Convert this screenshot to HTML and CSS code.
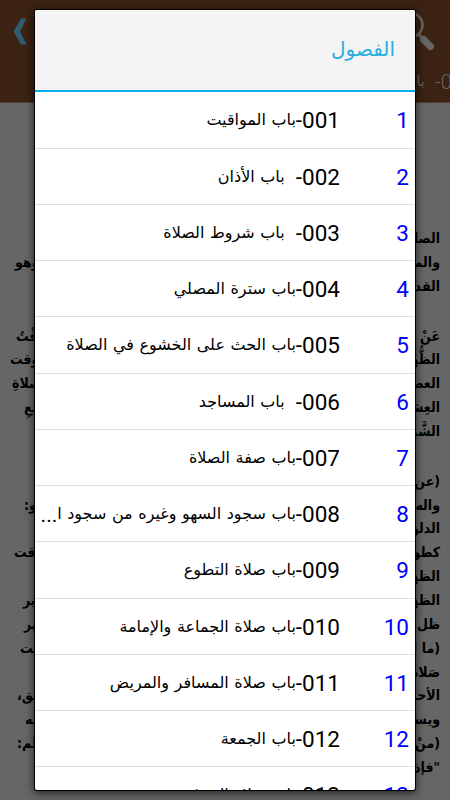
FILE: index.html
```html
<!DOCTYPE html>
<html lang="ar" dir="rtl">
<head>
    <meta charset="UTF-8">
    <meta name="viewport" content="width=device-width, initial-scale=1.0">
    <title>الفصول</title>
    <link rel="stylesheet" href="styles.css">
</head>
<body>
    <div class="page">
        <div class="toolbar">
            <div class="toolbar-icons">
                <svg class="search-icon" width="44" height="44" viewBox="0 0 44 44">
                    <circle cx="17.5" cy="14" r="12" fill="none" stroke="#666" stroke-width="2.6"/>
                    <path d="M25.5 23l4 4.5" stroke="#666" stroke-width="3"/>
                    <path d="M30.5 28.5L37.5 35.5" stroke="#666" stroke-width="7" stroke-linecap="round"/>
                </svg>
                <svg class="back-icon" width="14" height="27" viewBox="0 0 14 27">
                    <path d="M8 0.5H13.5L7 13.5L13.5 26.5H8L0.5 13.5Z" fill="#2f5e70"/>
                </svg>
            </div>
            <div class="toolbar-title"><span class="num">001-</span>&nbsp; &nbsp;<span class="text">باب المواقيت</span></div>
        </div>

        <div class="content">
            <div class="line"><span>الصلاة</span></div>
            <div class="line"><span>والمو</span><span class="l15">وهو</span></div>
            <div class="line"><span>القدر</span></div>
            <div class="line gap"></div>
            <div class="line"><span>عَنْ عـ</span><span class="l16">وقْتُ</span></div>
            <div class="line"><span>الظُّهْر</span><span class="l10">وقت</span></div>
            <div class="line"><span>العصر</span><span class="l12">صلاةِ</span></div>
            <div class="line"><span>العِشاء</span><span class="l24">لعِ</span></div>
            <div class="line"><span>الشَّمس</span></div>
            <div class="line gap"></div>
            <div class="line"><span>(عن</span></div>
            <div class="line"><span>واله</span><span class="l24">هو:</span></div>
            <div class="line"><span>الدلوك</span></div>
            <div class="line"><span>كطو</span><span class="l14">وقت</span></div>
            <div class="line"><span>الظهر</span></div>
            <div class="line"><span>الظهر</span><span class="l23">غير</span></div>
            <div class="line"><span>ظل كـ</span><span class="l24">غير</span></div>
            <div class="line"><span>(ما لـ</span><span class="l20">وقت</span></div>
            <div class="line"><span>صَلاة</span></div>
            <div class="line"><span>الأحمر</span><span class="l17">يق،</span></div>
            <div class="line"><span>ويستـ</span><span class="l25">له</span></div>
            <div class="line"><span>(منْ</span><span class="l17">سلم:</span></div>
            <div class="line"><span>"فإذا</span></div>
        </div>
    </div>

    <div class="dialog">
        <div class="dialog-title">الفصول</div>
        <div class="list">
            <div class="row"><span class="index">1</span><div class="name"><span class="num">001-</span><span class="text">باب المواقيت</span></div></div>
            <div class="row"><span class="index">2</span><div class="name"><span class="num">002-</span><span class="text">&nbsp; باب الأذان</span></div></div>
            <div class="row"><span class="index">3</span><div class="name"><span class="num">003-</span><span class="text">&nbsp; باب شروط الصلاة</span></div></div>
            <div class="row"><span class="index">4</span><div class="name"><span class="num">004-</span><span class="text">باب سترة المصلي</span></div></div>
            <div class="row"><span class="index">5</span><div class="name"><span class="num">005-</span><span class="text">باب الحث على الخشوع في الصلاة</span></div></div>
            <div class="row"><span class="index">6</span><div class="name"><span class="num">006-</span><span class="text">&nbsp; باب المساجد</span></div></div>
            <div class="row"><span class="index">7</span><div class="name"><span class="num">007-</span><span class="text">باب صفة الصلاة</span></div></div>
            <div class="row"><span class="index">8</span><div class="name"><span class="num">008-</span><span class="text">باب سجود السهو وغيره من سجود ا</span><span class="dots">...</span></div></div>
            <div class="row"><span class="index">9</span><div class="name"><span class="num">009-</span><span class="text">باب صلاة التطوع</span></div></div>
            <div class="row"><span class="index">10</span><div class="name"><span class="num">010-</span><span class="text">باب صلاة الجماعة والإمامة</span></div></div>
            <div class="row"><span class="index">11</span><div class="name"><span class="num">011-</span><span class="text">باب صلاة المسافر والمريض</span></div></div>
            <div class="row"><span class="index">12</span><div class="name"><span class="num">012-</span><span class="text">باب الجمعة</span></div></div>
            <div class="row"><span class="index">13</span><div class="name"><span class="num">013-</span><span class="text">باب صلاة الخوف</span></div></div>
        </div>
    </div>
</body>
</html>
```
FILE: styles.css
```css
* {
    margin: 0;
    padding: 0;
    box-sizing: border-box;
}

body {
    width: 450px;
    height: 800px;
    overflow: hidden;
    background: #666;
    font-family: Roboto, "DejaVu Sans", sans-serif;
}

.page {
    height: 800px;
    overflow: hidden;
}

.toolbar {
    height: 103px;
    background: #3b2212;
    border-bottom: 1px solid #4d4038;
}

.toolbar-icons {
    display: flex;
    justify-content: space-between;
    height: 68px;
    padding: 11px 13px 0 13px;
}

.back-icon {
    margin-top: 7px;
}

.toolbar-title {
    height: 30px;
    line-height: 28px;
    margin-right: -24px;
    font-size: 14px;
    color: #666;
    white-space: nowrap;
}

.toolbar-title .num {
    font-size: 20px;
    font-weight: 300;
}

.content {
    padding: 124px 10px 0 0;
    font-family: "DejaVu Sans Condensed", "DejaVu Sans", sans-serif;
    font-size: 14px;
    font-weight: bold;
    color: #000;
}

.line {
    display: flex;
    justify-content: space-between;
    height: 23.85px;
    line-height: 23.85px;
    white-space: nowrap;
}

.gap { height: 26px; }

.l10 { margin-left: 10px; }
.l12 { margin-left: 12px; }
.l14 { margin-left: 14px; }
.l15 { margin-left: 15px; }
.l16 { margin-left: 16px; }
.l17 { margin-left: 17px; }
.l20 { margin-left: 20px; }
.l23 { margin-left: 23px; }
.l24 { margin-left: 24px; }
.l25 { margin-left: 25px; }

/* dialog over the page */
.dialog {
    position: absolute;
    top: 10px;
    left: 35px;
    width: 380px;
    height: 780px;
    overflow: hidden;
    background: #fff;
    border-radius: 2px;
    box-shadow: 0 0 0 1px #000, 0 2px 9px 1px rgba(0, 0, 0, 0.7);
}

.dialog-title {
    height: 82px;
    padding-right: 20px;
    line-height: 78px;
    background: #f4f4f4;
    border-bottom: 2px solid #00b0e4;
    font-size: 20px;
    color: #28aee0;
}

.list {
    padding-top: 0.3px;
}

.row {
    display: flex;
    height: 56.25px;
    padding-right: 6px;
    line-height: 56px;
    border-bottom: 1px solid #dedede;
}

.index {
    width: 69px;
    font-size: 22.5px;
    color: #00f;
}

.name {
    flex: 1;
    font-size: 16px;
    color: #000;
    white-space: nowrap;
}

.num {
    font-size: 22.5px;
}

/* arabic text sits a little above the digits' baseline */
.text {
    position: relative;
    top: -3px;
    word-spacing: 1.6px;
}

.dots {
    font-size: 21px;
}
```
